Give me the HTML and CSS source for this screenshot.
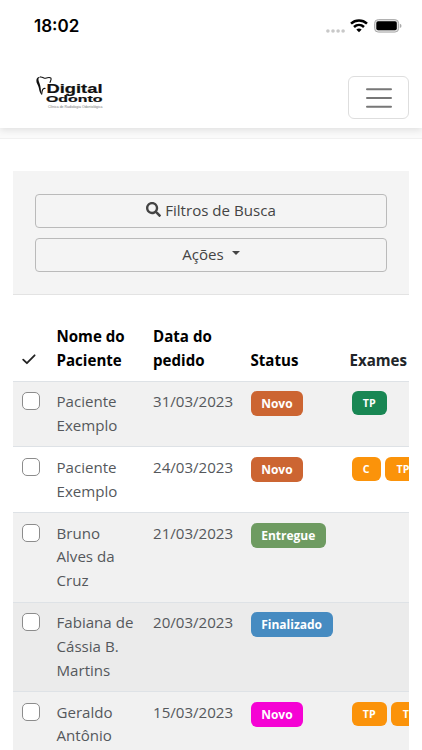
FILE: index.html
```html
<!DOCTYPE html>
<html lang="pt-BR">
<head>
<meta charset="utf-8">
<meta name="viewport" content="width=device-width, initial-scale=1">
<title>Digital Odonto</title>
<link rel="stylesheet" href="styles.css">
</head>
<body>
<header class="top">
  <div class="statusbar">
    <time class="clock">18:02</time>
    <div class="indicators">
      <svg class="signal" width="19" height="4" viewBox="0 0 19 4" fill="#c8c8c8"><circle cx="1.9" cy="2" r="1.8"/><circle cx="7" cy="2" r="1.8"/><circle cx="12.1" cy="2" r="1.8"/><circle cx="17.1" cy="2" r="1.8"/></svg>
      <svg class="wifi" width="18" height="14" viewBox="0 0 18 14" fill="none" stroke="#000" stroke-width="2.500"><path d="M1 4.600C5.500.400 12.500.400 17 4.600"/><path d="M4 8C6.900 5.300 11.100 5.300 14 8"/><path d="M6.300 10.500Q9 8.400 11.700 10.500L9 13.200Z" fill="#000" stroke="none"/></svg>
      <svg class="battery" width="28" height="14" viewBox="0 0 28 14"><rect x=".6" y=".6" width="24" height="12.500" rx="3.700" fill="#e4e4e4" stroke="#aaa" stroke-width="1"/><rect x="2.300" y="2.300" width="20.500" height="9" rx="1.800" fill="#000"/><path d="M25.900 4.800q1.600.5 1.600 2.100t-1.600 2.100z" fill="#aaa"/></svg>
    </div>
  </div>
  <nav class="navbar">
    <svg class="logo" width="70" height="36" viewBox="0 0 70 36">
      <path d="M4 1C7 .600 7.500 2.500 9.500 2.300C11.500 1.500 13.800.900 15 2.200C15.600 3.600 14.500 5 13.800 6.800" fill="none" stroke="#111" stroke-width="1.100"/>
      <path d="M5 .8C1.800 1.500 2 4 3.400 7C5 10.500 4.600 14 5.600 18.700C2.600 15.500 3.600 12 1.400 8.300C-.8 4.300.500.500 5 .800Z" fill="#111"/>
      <path d="M5.600 18.500C6 15 6.500 11.500 9.500 12.500" fill="none" stroke="#111" stroke-width="1.200"/>
      <text class="logo-name" x="10.500" y="16.700" textLength="56" lengthAdjust="spacingAndGlyphs">Digital</text>
      <text class="logo-name logo-second" x="10" y="26" textLength="56.500" lengthAdjust="spacingAndGlyphs">Odonto</text>
      <text class="logo-tag" x="12" y="31.500" textLength="54.500" lengthAdjust="spacingAndGlyphs">Clínica de Radiologia Odontológica</text>
    </svg>
    <button class="toggler" aria-label="Menu"><svg width="28" height="22" viewBox="0 0 28 22" stroke="#777" stroke-width="2" stroke-linecap="round"><path d="M2 2.200h24M2 11h24M2 19.800h24"/></svg></button>
  </nav>
</header>
<div class="strip"></div>
<main class="content">
  <section class="filters">
    <button class="btn"><svg width="15" height="15" viewBox="0 0 512 512" fill="#444"><path d="M505 442.700 405.300 343c-4.500-4.500-10.600-7-17-7H372c27.600-35.300 44-79.700 44-128C416 93.100 322.900 0 208 0S0 93.100 0 208s93.100 208 208 208c48.300 0 92.700-16.400 128-44v16.300c0 6.400 2.500 12.500 7 17l99.700 99.700c9.400 9.400 24.600 9.400 33.900 0l28.300-28.300c9.400-9.400 9.400-24.600.1-34zM208 336c-70.700 0-128-57.200-128-128 0-70.700 57.200-128 128-128 70.700 0 128 57.200 128 128 0 70.700-57.200 128-128 128z"/></svg><span>Filtros de Busca</span></button>
    <button class="btn"><span>Ações</span><i class="caret"></i></button>
  </section>
  <section class="table">
    <div class="row head">
      <div><svg class="check" width="14" height="11" viewBox="0 0 14 11" fill="none" stroke="#222" stroke-width="1.800" stroke-linecap="round" stroke-linejoin="round"><path d="M1.200 5.600 4.900 9.200 12.600 1.300"/></svg></div>
      <div>Nome do Paciente</div><div>Data do pedido</div><div>Status</div><div class="exams-head">Exames</div>
    </div>
    <div class="row odd">
      <div><span class="box"></span></div><div>Paciente Exemplo</div><div>31/03/2023</div>
      <div><span class="badge orange">Novo</span></div>
      <div class="exams"><span class="tag green">TP</span></div>
    </div>
    <div class="row">
      <div><span class="box"></span></div><div>Paciente Exemplo</div><div>24/03/2023</div>
      <div><span class="badge orange">Novo</span></div>
      <div class="exams"><span class="tag">C</span><span class="tag">TP</span></div>
    </div>
    <div class="row odd">
      <div><span class="box"></span></div><div>Bruno Alves da Cruz</div><div>21/03/2023</div>
      <div><span class="badge olive">Entregue</span></div>
      <div class="exams"></div>
    </div>
    <div class="row hover">
      <div><span class="box"></span></div><div>Fabiana de Cássia B. Martins</div><div>20/03/2023</div>
      <div><span class="badge blue">Finalizado</span></div>
      <div class="exams"></div>
    </div>
    <div class="row odd last">
      <div><span class="box"></span></div><div>Geraldo Antônio</div><div>15/03/2023</div>
      <div><span class="badge magenta">Novo</span></div>
      <div class="exams"><span class="tag">TP</span><span class="tag">TP</span></div>
    </div>
  </section>
</main>
</body>
</html>
```
FILE: styles.css
```css
* { box-sizing: border-box; }
html, body { height: 750px; overflow: hidden; }
body {
  margin: 0;
  background: #fff;
  color: #55585c;
  font: 15.1px/23.85px "Open Sans", sans-serif;
}
svg { display: block; flex: none; }
.top {
  position: relative;
  height: 128px;
  background: #fff;
  box-shadow: 0 2px 7px rgba(0, 0, 0, .11);
}
.statusbar {
  display: flex;
  justify-content: space-between;
  height: 76px;
  padding: 16px 20px 0 34px;
}
.clock { font: 600 17px/21px Inter, sans-serif; color: #000; }
.indicators { display: flex; align-items: flex-start; padding-top: 3px; }
.signal { margin: 9.500px 5px 0 0; }
.wifi { margin-right: 6px; }
.navbar {
  display: flex;
  justify-content: space-between;
  padding: 0 13px 0 36px;
}
.logo-name {
  font: bold 13.500px "Liberation Sans", sans-serif;
  fill: #111;
  stroke: #111;
  stroke-width: .2px;
}
.logo-second { font-size: 9.800px; stroke-width: .2px; }
.logo-tag { font: 3.800px "Liberation Sans", sans-serif; fill: #777; }
.toggler {
  display: flex;
  align-items: center;
  justify-content: center;
  width: 61px;
  height: 43px;
  padding: 0;
  border: 1px solid #dedede;
  border-radius: 6px;
  background: #fff;
}
.strip { height: 11px; background: #fafafa; border-bottom: 1px solid #f1f1f1; }
.content { padding: 32px 13.500px 0 13px; }
.filters {
  display: grid;
  gap: 10px;
  height: 124px;
  padding: 22.500px 21.500px 22px 22px;
  align-content: start;
  background: #f4f4f4;
  border-bottom: 1px solid #e3e3e3;
}
.btn {
  display: flex;
  align-items: center;
  justify-content: center;
  gap: 4px;
  height: 34px;
  padding: 0 0 2px;
  border: 1px solid #bababa;
  border-radius: 4px;
  background: transparent;
  color: #444;
  font: 15.100px/24px "Open Sans", sans-serif;
}
.caret {
  margin: 0 0 1px 4px;
  border: 4.500px solid transparent;
  border-top-color: #444;
  border-bottom: 0;
}
.table { padding-top: 20.700px; }
.row {
  display: grid;
  grid-template-columns: 35.500px 96.500px 97.500px 99px 1fr;
  padding-top: 8.500px;
  padding-bottom: 8.500px;
  border-bottom: 1px solid #dee2e6;
  overflow: hidden;
}
.row > div { padding: 0 8px; min-width: 0; }
.row > div:first-child { padding: 0 0 0 9px; }
.row > div:last-child { padding-right: 0; }
.head {
  align-items: end;
  padding-top: 8.200px;
  padding-bottom: 8.800px;
  color: #000;
  font-weight: 700;
  line-height: 24px;
}
.exams-head { color: #212529; }
.check { margin-bottom: 6.500px; }
.odd { background: #f1f1f1; }
.hover { background: #ebebeb; }
.last { min-height: 90px; }
.box {
  display: block;
  width: 18px;
  height: 18px;
  margin-top: 2px;
  border: 1.500px solid #8c8c8c;
  border-radius: 5px;
  background: #fff;
}
.badge, .tag {
  display: block;
  width: max-content;
  margin-top: 1.300px;
  padding: 0 10.700px;
  border-radius: 6px;
  color: #fff;
  font-size: 12px;
  font-weight: 700;
  line-height: 25px;
}
.tag { padding: 0 11.200px; background: #fb930a; font-size: 10.700px; line-height: 24px; }
.row > .exams { display: flex; align-items: flex-start; gap: 4.700px; padding-left: 10px; }
.orange { background: #cc6532; }
.green { background: #198754; }
.olive { background: #6e9b61; }
.blue { background: #468bc1; }
.magenta { background: #f503d4; }
```
